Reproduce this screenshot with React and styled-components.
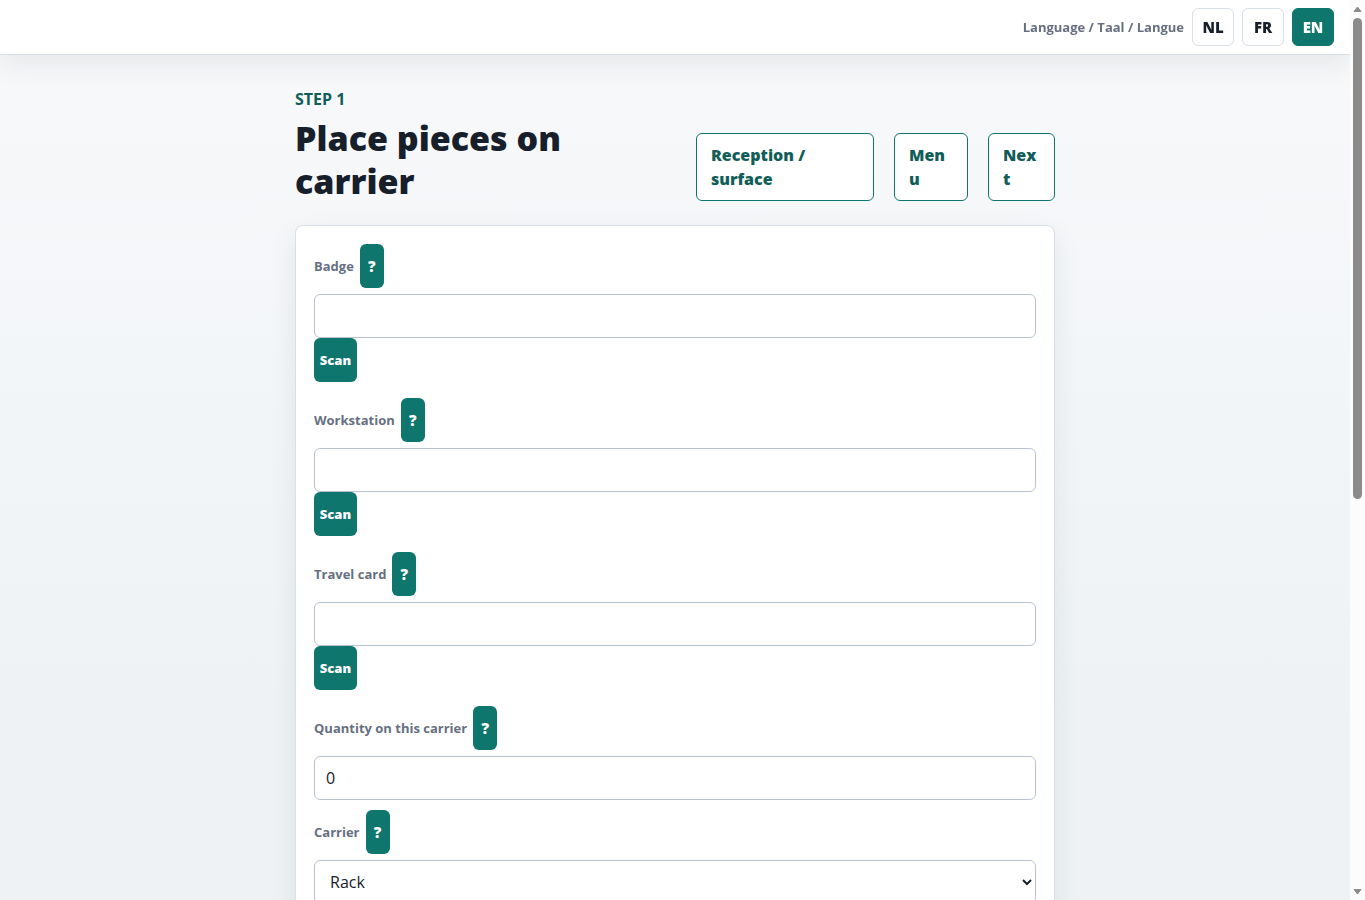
import React, { useState } from "react";
import styled, { createGlobalStyle, css } from "styled-components";

const GlobalStyle = createGlobalStyle`
  * {
    box-sizing: border-box;
  }

  body {
    margin: 0;
    color: #17202a;
    font-family: "Open Sans", "Noto Sans", sans-serif;
    font-size: 16px;
    line-height: 24px;
  }

  button, input, select {
    font: inherit;
    color: inherit;
  }
`;

const Page = styled.div`
  display: grid;
  grid-template-columns: minmax(0, 1fr) 15px;
  height: 100vh;
`;

const Content = styled.div`
  overflow-y: auto;
  scrollbar-width: none;
  background: linear-gradient(180deg, #f8f9fb 0%, #eef2f5 80%);
`;

const Scrollbar = styled.div`
  display: flex;
  flex-direction: column;
  align-items: center;
  background: #fcfcfc;
`;

const ScrollTrack = styled.div`
  flex: 1;
  width: 9px;
`;

const ScrollThumb = styled.div`
  height: 55.7%;
  border-radius: 5px;
  background: #8b8b8b;
`;

const LanguageBar = styled.nav`
  position: sticky;
  top: 0;
  z-index: 1;
  display: flex;
  align-items: center;
  justify-content: flex-end;
  gap: 8px;
  padding: 8px 16px;
  background: #fff;
  border-bottom: 1px solid #d8dfe8;
  box-shadow: 0 10px 28px rgba(23, 32, 42, 0.08);
`;

const LanguageLabel = styled.span`
  color: #667080;
  font-size: 13px;
  font-weight: 700;
`;

const LanguageButton = styled.button`
  width: 42px;
  height: 38px;
  padding: 0;
  border: 1px solid #d8dfe8;
  border-radius: 6px;
  background: #fff;
  font-size: 15px;
  font-weight: 800;
  cursor: pointer;

  ${(props) =>
    props.$active &&
    css`
      background: #0f766e;
      border-color: #0f766e;
      color: #fff;
    `}
`;

const Main = styled.main`
  width: min(760px, 100% - 32px);
  margin: 0 auto;
  padding: 32px 0;
`;

const Header = styled.header`
  display: grid;
  grid-template-columns: minmax(0, 1fr) 178px 74px 67px;
  align-items: end;
  gap: 20px;
  margin-bottom: 24px;
`;

const Step = styled.p`
  margin: 0 0 6px;
  color: #115e59;
  font-size: 16px;
  font-weight: 700;
`;

const Title = styled.h1`
  margin: 0 0 -2px;
  font-size: 34px;
  font-weight: 800;
  line-height: 43px;
`;

const NavLink = styled.a`
  padding: 9px 14px;
  border: 1px solid #0f766e;
  border-radius: 6px;
  background: #fff;
  color: #115e59;
  font-weight: 800;
  text-decoration: none;
  overflow-wrap: anywhere;
`;

const Card = styled.form`
  display: grid;
  gap: 10px;
  align-content: start;
  min-height: 1320px;
  padding: 18px;
  border: 1px solid #d8dfe8;
  border-radius: 8px;
  background: #fff;
  box-shadow: 0 10px 28px rgba(23, 32, 42, 0.08);
`;

const Field = styled.div`
  padding-bottom: ${(props) => (props.$scan ? "6px" : "0")};
`;

const LabelRow = styled.div`
  display: flex;
  align-items: center;
  gap: 6px;
  margin-bottom: 6px;
`;

const Label = styled.label`
  color: #667080;
  font-size: 13px;
  font-weight: 700;
`;

const Button = styled.button`
  display: block;
  min-width: ${(props) => (props.$help ? "24px" : "43px")};
  height: 44px;
  padding: 0;
  border: 0;
  border-radius: 6px;
  background: #0f766e;
  color: #fff;
  font-size: ${(props) => (props.$help ? "15px" : "13px")};
  font-weight: 800;
  cursor: pointer;
`;

const controlStyles = css`
  display: block;
  width: 100%;
  height: 44px;
  padding: 0 11px;
  border: 1px solid #b8c3d0;
  border-radius: 6px;
  background: #fff;
`;

const Input = styled.input`
  ${controlStyles}
`;

const Select = styled.select`
  ${controlStyles}
  padding: 0 0 0 11px;
`;

const languages = ["NL", "FR", "EN"];

const scanFields = [
  { id: "badge", label: "Badge" },
  { id: "workstation", label: "Workstation" },
  { id: "travel-card", label: "Travel card" },
];

const FieldLabel = ({ id, label }) => (
  <LabelRow>
    <Label htmlFor={id}>{label}</Label>
    <Button type="button" $help>?</Button>
  </LabelRow>
);

const ScanField = ({ id, label }) => (
  <Field $scan>
    <FieldLabel id={id} label={label} />
    <Input id={id} type="text" />
    <Button type="button">Scan</Button>
  </Field>
);

const ScrollArrow = ({ d }) => (
  <svg width="15" height="18" viewBox="0 0 15 18">
    <path d={d} fill="#8b8b8b" stroke="#8b8b8b" strokeLinejoin="round" />
  </svg>
);

const App = () => {
  const [language, setLanguage] = useState("EN");
  const [quantity, setQuantity] = useState("0");

  return (
    <Page>
      <GlobalStyle />
      <Content>
        <LanguageBar>
          <LanguageLabel>Language / Taal / Langue</LanguageLabel>
          {languages.map((code) => (
            <LanguageButton
              key={code}
              type="button"
              $active={code === language}
              onClick={() => setLanguage(code)}
            >
              {code}
            </LanguageButton>
          ))}
        </LanguageBar>
        <Main>
          <Header>
            <div>
              <Step>STEP 1</Step>
              <Title>Place pieces on carrier</Title>
            </div>
            <NavLink href="#reception">Reception / surface</NavLink>
            <NavLink href="#menu">Menu</NavLink>
            <NavLink href="#next">Next</NavLink>
          </Header>
          <Card>
            {scanFields.map((field) => (
              <ScanField key={field.id} {...field} />
            ))}
            <Field>
              <FieldLabel id="quantity" label="Quantity on this carrier" />
              <Input
                id="quantity"
                type="text"
                inputMode="numeric"
                value={quantity}
                onChange={(e) => setQuantity(e.target.value)}
              />
            </Field>
            <Field>
              <FieldLabel id="carrier" label="Carrier" />
              <Select id="carrier">
                <option>Rack</option>
              </Select>
            </Field>
          </Card>
        </Main>
      </Content>
      <Scrollbar aria-hidden="true">
        <ScrollArrow d="M4 11.5h7L7.5 7z" />
        <ScrollTrack>
          <ScrollThumb />
        </ScrollTrack>
        <ScrollArrow d="M4 7.5h7L7.5 12z" />
      </Scrollbar>
    </Page>
  );
};

export default App;
